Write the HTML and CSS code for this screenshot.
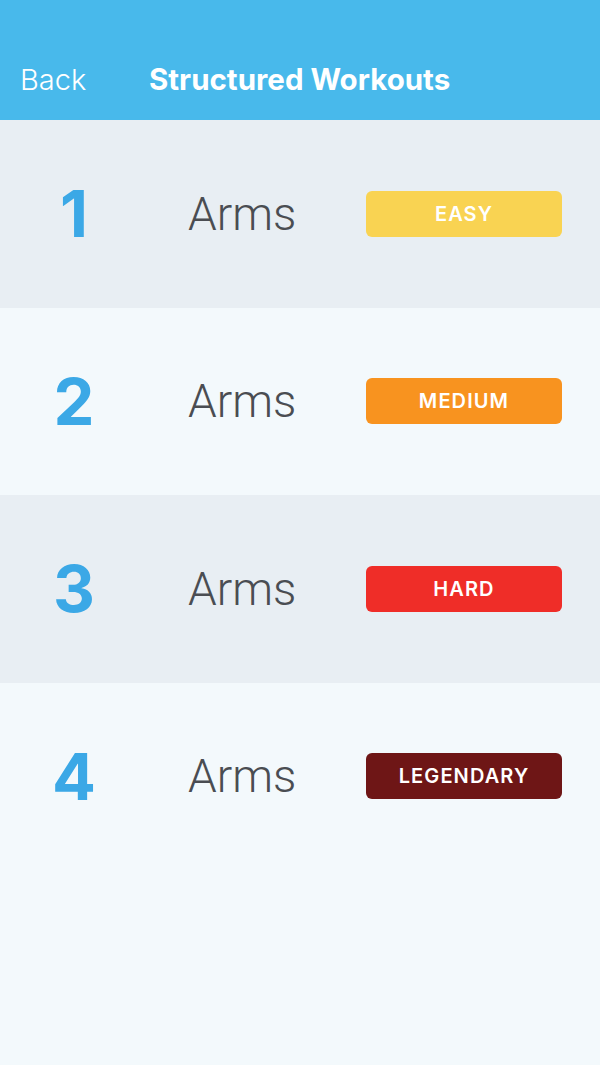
FILE: index.html
```html
<!DOCTYPE html>
<html>
<head>
<meta charset="utf-8">
<link rel="stylesheet" href="styles.css">
</head>
<body>
<div class="app">
  <header class="nav">
    <span class="back">Back</span>
    <span class="title">Structured Workouts</span>
  </header>
  <main class="list">
    <div class="row alt">
      <div class="num">1</div>
      <div class="name">Arms</div>
      <div class="badge easy">EASY</div>
    </div>
    <div class="row">
      <div class="num">2</div>
      <div class="name">Arms</div>
      <div class="badge medium">MEDIUM</div>
    </div>
    <div class="row alt">
      <div class="num">3</div>
      <div class="name">Arms</div>
      <div class="badge hard">HARD</div>
    </div>
    <div class="row">
      <div class="num">4</div>
      <div class="name">Arms</div>
      <div class="badge legendary">LEGENDARY</div>
    </div>
  </main>
</div>
</body>
</html>
```
FILE: styles.css
```css
html, body {
  margin: 0;
  padding: 0;
}
body {
  width: 600px;
  height: 1065px;
  background: #f3f9fc;
  font-family: Inter, "Liberation Sans", sans-serif;
  overflow: hidden;
}
.app {
  display: flex;
  flex-direction: column;
  height: 1065px;
}
.nav {
  height: 120px;
  background: #48b9eb;
  color: #fff;
  display: flex;
  align-items: flex-end;
  padding: 0 0 23px 20px;
  box-sizing: border-box;
}
.back {
  font-size: 29px;
  font-weight: 300;
  width: 129px;
}
.title {
  font-size: 29.5px;
  font-weight: 700;
}
.list {
  display: flex;
  flex-direction: column;
}
.row {
  height: 187.5px;
  display: flex;
  align-items: center;
  background: #f3f9fc;
}
.row.alt {
  background: #e8eef3;
}
.num {
  width: 148px;
  text-align: center;
  font-size: 65px;
  font-weight: 700;
  color: #3ba8e6;
  line-height: 1;
}
.name {
  width: 218px;
  box-sizing: border-box;
  padding-left: 40px;
  font-family: Roboto, "Liberation Sans", sans-serif;
  font-size: 46px;
  font-weight: 300;
  color: #4a4d52;
  line-height: 1;
}
.badge {
  width: 196px;
  height: 46px;
  border-radius: 6px;
  display: flex;
  align-items: center;
  justify-content: center;
  color: #fff;
  font-family: Inter, "Liberation Sans", sans-serif;
  font-weight: 600;
  font-size: 20px;
  letter-spacing: 1.1px;
}
.easy { background: #f9d352; }
.medium { background: #f8931f; }
.hard { background: #ef2d28; }
.legendary { background: #6e1616; }
```
